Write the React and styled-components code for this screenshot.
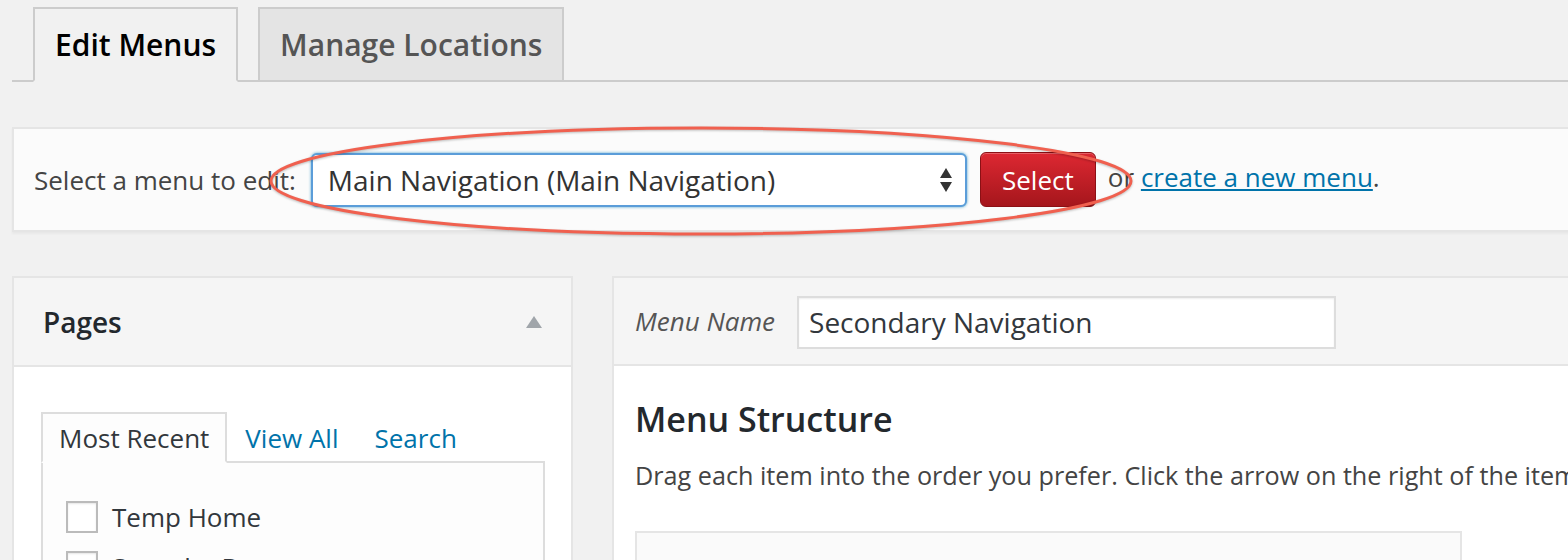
import styled, { createGlobalStyle } from "styled-components";

const GlobalStyle = createGlobalStyle`
  html, body {
    margin: 0;
    padding: 0;
    background: #f1f1f1;
    overflow: hidden;
  }
  body {
    font-family: "Open Sans", "Noto Sans", sans-serif;
    color: #444;
  }
`;

export default function App() {
  return (
    <>
      <GlobalStyle />
      <Page>
        <TabRow>
          <NavTab $active>Edit Menus</NavTab>
          <NavTab>Manage Locations</NavTab>
        </TabRow>

        <ManageBox>
          <Label>Select a menu to edit:</Label>
          <SelectBox>
            <span>Main Navigation (Main Navigation)</span>
            <svg width="14" height="26" viewBox="0 0 14 26">
              <path d="M7 1 L13 11 L1 11 Z" fill="#333" />
              <path d="M1 15 L13 15 L7 25 Z" fill="#333" />
            </svg>
          </SelectBox>
          <RedButton>Select</RedButton>
          <OrText>
            or <NewLink>create a new menu</NewLink>.
          </OrText>
        </ManageBox>

        <Columns>
          <SidePanel>
            <PanelHeader>
              <PanelTitle>Pages</PanelTitle>
              <svg width="18" height="14" viewBox="0 0 18 14">
                <path d="M9 1 L17 13 L1 13 Z" fill="#a0a5aa" />
              </svg>
            </PanelHeader>
            <PanelBody>
              <InnerTabs>
                <InnerTab $active>Most Recent</InnerTab>
                <InnerTab>View All</InnerTab>
                <InnerTab>Search</InnerTab>
              </InnerTabs>
              <TabPanel>
                <CheckRow>
                  <Check />
                  <span>Temp Home</span>
                </CheckRow>
                <CheckRow>
                  <Check />
                  <span>Save the Date</span>
                </CheckRow>
              </TabPanel>
            </PanelBody>
          </SidePanel>

          <MainPanel>
            <MainHeader>
              <NameLabel>Menu Name</NameLabel>
              <NameInput>Secondary Navigation</NameInput>
            </MainHeader>
            <MainBody>
              <Heading>Menu Structure</Heading>
              <Para>
                Drag each item into the order you prefer. Click the arrow on
                the right of the item to reveal additional configuration
                options.
              </Para>
              <ItemBox />
            </MainBody>
          </MainPanel>
        </Columns>

        <Highlight width="1568" height="560" viewBox="0 0 1568 560">
          <ellipse
            cx="701"
            cy="181"
            rx="430"
            ry="53"
            fill="none"
            stroke="#f0604f"
            strokeWidth="3"
          />
        </Highlight>
      </Page>
    </>
  );
}

const Page = styled.div`
  position: relative;
  width: 1568px;
  height: 560px;
  padding-top: 7px;
  box-sizing: border-box;
`;

const Highlight = styled.svg`
  position: absolute;
  left: 0;
  top: 0;
  pointer-events: none;
  filter: drop-shadow(0 1px 1px rgba(0, 0, 0, 0.25));
`;

const TabRow = styled.div`
  display: flex;
  align-items: flex-end;
  gap: 20px;
  margin-left: 12px;
  padding-left: 21px;
  border-bottom: 2px solid #ccc;
`;

const NavTab = styled.div`
  height: 71px;
  padding: 0 20px;
  margin-bottom: -2px;
  display: flex;
  align-items: center;
  border: 2px solid #ccc;
  border-bottom-color: ${(p) => (p.$active ? "#f1f1f1" : "#ccc")};
  background: ${(p) => (p.$active ? "#f1f1f1" : "#e4e4e4")};
  color: ${(p) => (p.$active ? "#000" : "#555")};
  font-size: 30px;
  font-weight: 600;
`;

const ManageBox = styled.div`
  margin: 45px -40px 0 12px;
  height: 101px;
  display: flex;
  align-items: center;
  padding-left: 20px;
  background: #fbfbfb;
  border: 2px solid #e5e5e5;
  box-shadow: 0 2px 2px rgba(0, 0, 0, 0.04);
`;

const Label = styled.span`
  font-size: 26px;
  color: #444;
  margin-right: 15px;
`;

const SelectBox = styled.div`
  width: 656px;
  height: 54px;
  box-sizing: border-box;
  display: flex;
  align-items: center;
  justify-content: space-between;
  padding: 0 12px 0 15px;
  background: #fff;
  border: 2px solid #5b9dd9;
  border-radius: 6px;
  box-shadow: 0 0 3px rgba(30, 140, 190, 0.8);
  font-size: 28px;
  color: #333;
`;

const RedButton = styled.div`
  margin-left: 13px;
  width: 116px;
  height: 55px;
  box-sizing: border-box;
  display: flex;
  align-items: center;
  justify-content: center;
  border: 1px solid #8c1015;
  border-radius: 6px;
  background: linear-gradient(#dd2832, #a5161c);
  color: #fff;
  font-size: 26px;
  box-shadow: inset 0 1px 0 rgba(255, 255, 255, 0.25);
`;

const OrText = styled.span`
  margin-left: 12px;
  margin-bottom: 6px;
  font-size: 26px;
  color: #444;
`;

const NewLink = styled.a`
  color: #0073aa;
  text-decoration: underline;
`;

const Columns = styled.div`
  display: flex;
  gap: 39px;
  margin: 44px -80px 0 12px;
`;

const SidePanel = styled.div`
  width: 561px;
  flex-shrink: 0;
  border: 2px solid #e5e5e5;
  box-sizing: border-box;
  background: #fff;
`;

const PanelHeader = styled.div`
  height: 87px;
  display: flex;
  align-items: center;
  justify-content: space-between;
  padding: 0 28px 0 29px;
  background: #f5f5f5;
  border-bottom: 2px solid #e5e5e5;
`;

const PanelTitle = styled.h3`
  margin: 0;
  font-size: 28px;
  font-weight: 600;
  color: #23282d;
`;

const PanelBody = styled.div`
  padding: 45px 26px 0 27px;
`;

const InnerTabs = styled.div`
  display: flex;
  align-items: flex-end;
`;

const InnerTab = styled.div`
  height: 51px;
  box-sizing: border-box;
  display: flex;
  align-items: center;
  padding: 0 16px;
  margin-bottom: -2px;
  font-size: 26px;
  color: ${(p) => (p.$active ? "#32373c" : "#0073aa")};
  border: 2px solid ${(p) => (p.$active ? "#ddd" : "transparent")};
  border-bottom-color: ${(p) => (p.$active ? "#fdfdfd" : "transparent")};
  background: ${(p) => (p.$active ? "#fdfdfd" : "transparent")};
`;

const TabPanel = styled.div`
  border: 2px solid #ddd;
  background: #fdfdfd;
  padding: 36px 23px 20px;
  display: flex;
  flex-direction: column;
  gap: 14px;
`;

const CheckRow = styled.div`
  display: flex;
  align-items: center;
  gap: 14px;
  font-size: 26px;
  color: #32373c;
`;

const Check = styled.div`
  width: 32px;
  height: 32px;
  box-sizing: border-box;
  border: 2px solid #bbb;
  background: #fff;
  box-shadow: inset 0 1px 2px rgba(0, 0, 0, 0.1);
`;

const MainPanel = styled.div`
  flex: 1;
  border: 2px solid #e5e5e5;
  background: #fff;
`;

const MainHeader = styled.div`
  height: 86px;
  display: flex;
  align-items: center;
  gap: 22px;
  padding-left: 21px;
  background: #f5f5f5;
  border-bottom: 2px solid #e5e5e5;
`;

const NameLabel = styled.span`
  font-size: 26px;
  font-style: italic;
  color: #555;
`;

const NameInput = styled.div`
  width: 539px;
  height: 53px;
  box-sizing: border-box;
  display: flex;
  align-items: center;
  padding-left: 10px;
  margin-top: 2px;
  background: #fff;
  border: 2px solid #ddd;
  box-shadow: inset 0 1px 2px rgba(0, 0, 0, 0.07);
  font-size: 28px;
  color: #32373c;
`;

const MainBody = styled.div`
  padding: 30px 0 0 21px;
`;

const Heading = styled.h3`
  margin: 0;
  font-size: 34px;
  font-weight: 600;
  color: #23282d;
`;

const Para = styled.p`
  margin: 16px 0 0;
  font-size: 25.2px;
  color: #444;
  white-space: nowrap;
`;

const ItemBox = styled.div`
  margin-top: 39px;
  width: 827px;
  height: 60px;
  box-sizing: border-box;
  border: 2px solid #e5e5e5;
  background: #fafafa;
`;
